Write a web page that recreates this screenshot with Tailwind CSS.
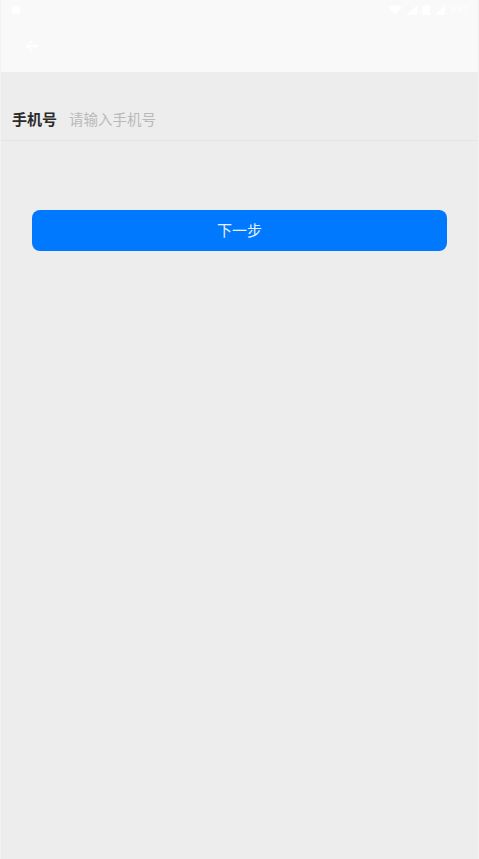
<!DOCTYPE html>
<html lang="zh-CN">
<head>
<meta charset="utf-8">
<script src="https://cdn.jsdelivr.net/npm/@tailwindcss/browser@4"></script>
<title>手机号</title>
</head>
<body class="bg-[#ededed] font-['Liberation_Sans','Noto_Sans_CJK_SC',sans-serif]">
<div class="h-[859px] w-[479px] overflow-hidden flex flex-col border-x border-[#f2f2f2]">
  <header class="h-[72px] bg-[#f9f9f9] shrink-0 flex flex-col px-2.5">
    <div class="h-[19px] flex items-center justify-between text-white">
      <svg class="w-2.5 h-2.5" viewBox="0 0 10 10"><rect x="1" y="1" width="8" height="8" rx="1.5" fill="#fff"/></svg>
      <div class="flex items-center gap-[5px]">
        <svg class="w-[13px] h-2.5" viewBox="0 0 13 10"><path d="M0 2.5 C3.5 -0.5 9.5 -0.5 13 2.5 L6.5 10 Z" fill="#fff"/></svg>
        <svg class="w-2.5 h-2.5" viewBox="0 0 10 10"><path d="M0 10 L10 0 V10 Z" fill="#fff"/></svg>
        <svg class="w-2 h-2.5" viewBox="0 0 8 10"><path d="M2 0 H6 V1 H8 V10 H0 V1 H2 Z" fill="#fff"/></svg>
        <svg class="w-2.5 h-2.5" viewBox="0 0 10 10"><path d="M0 10 L10 0 V10 Z" fill="#fff"/></svg>
        <span class="text-[9px] leading-none font-medium">9:41</span>
      </div>
    </div>
    <div class="mt-5 ml-3.5">
      <svg class="w-3.5 h-3.5" viewBox="0 0 14 14" fill="none" stroke="#fff" stroke-width="2"><path d="M13 7 H2 M7 2 L2 7 L7 12"/></svg>
    </div>
  </header>
  <div class="mt-[35px] h-[34px] border-b border-[#e4e4e4] pl-[11px] flex items-start gap-3 shrink-0">
    <span class="text-[15px] leading-[26px] font-bold text-[#2b2b2b]">手机号</span>
    <span class="text-[14.5px] leading-[26px] text-[#b9b9b9]">请输入手机号</span>
  </div>
  <button class="mt-[69px] mx-[31px] h-[41px] bg-[#0179ff] rounded-lg text-white/90 text-[15px] pt-0.5 flex items-center justify-center shrink-0">下一步</button>
</div>
</body>
</html>
